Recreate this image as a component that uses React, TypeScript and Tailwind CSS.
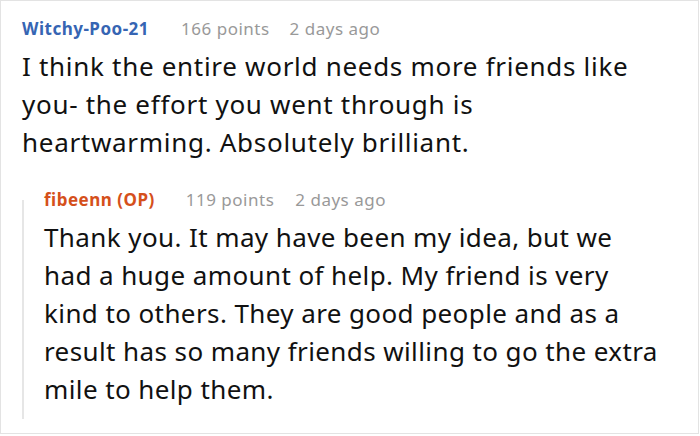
const first = [
  'I think the entire world needs more friends like',
  'you- the effort you went through is',
  'heartwarming. Absolutely brilliant.',
];

const reply = [
  'Thank you. It may have been my idea, but we',
  'had a huge amount of help. My friend is very',
  'kind to others. They are good people and as a',
  'result has so many friends willing to go the extra',
  'mile to help them.',
];

export default function App() {
  return (
    <div className="w-[700px] h-[436px] bg-white font-['Noto_Sans',sans-serif] overflow-hidden">
      <div className="h-[434px] w-[699px] border border-[#e3e3e3] pl-[21px] pt-[16px]">
        <div className="flex items-baseline text-[17px] leading-[24px] tracking-[0.5px]">
          <span className="font-bold text-[#3665b3]">Witchy-Poo-21</span>
          <span className="ml-[32px] text-[#999999]">166 points</span>
          <span className="ml-[20px] text-[#999999]">2 days ago</span>
        </div>
        <p className="mt-[6px] text-[26px] leading-[38px] tracking-[0.7px] text-[#111111]">
          {first.map((line) => (
            <span key={line} className="block whitespace-nowrap">{line}</span>
          ))}
        </p>

        <div className="mt-[39px] flex flex-col border-l-2 border-[#e6e6e6] pl-[20px] pb-[11px]">
          <div className="-mt-[12px] flex items-baseline text-[17px] leading-[24px] tracking-[0.5px]">
            <span className="font-bold text-[#d5501b]">fibeenn (OP)</span>
            <span className="ml-[31px] text-[#999999]">119 points</span>
            <span className="ml-[21px] text-[#999999]">2 days ago</span>
          </div>
          <p className="mt-[6px] text-[26px] leading-[38px] tracking-[0.4px] text-[#111111]">
            {reply.map((line) => (
              <span key={line} className="block whitespace-nowrap">{line}</span>
            ))}
          </p>
        </div>
      </div>
    </div>
  );
}
